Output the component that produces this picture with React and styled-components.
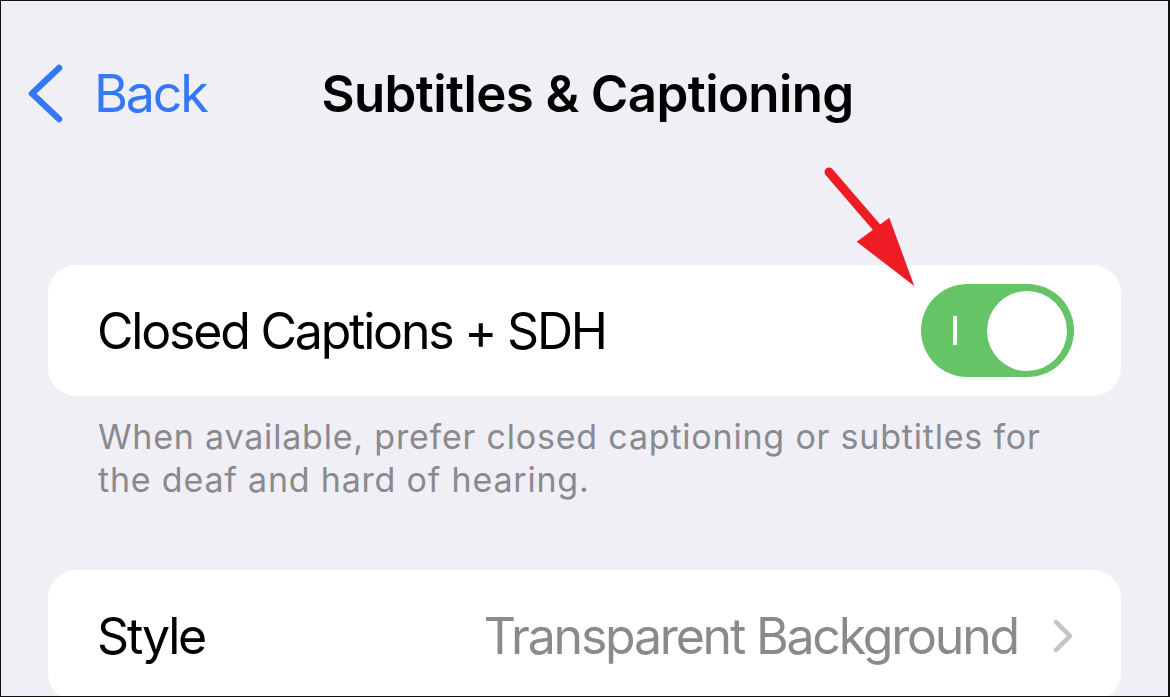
import styled, { createGlobalStyle } from "styled-components"

const GlobalStyle = createGlobalStyle`
  html, body {
    margin: 0;
    padding: 0;
    background: #f0eff5;
  }
  * { box-sizing: border-box; }
`

const Screen = styled.div`
  position: relative;
  width: 1170px;
  height: 697px;
  overflow: hidden;
  background: #f0eff5;
  border: 1px solid #111;
  border-right-width: 2px;
  font-family: Inter, "Noto Sans", sans-serif;
  color: #000;
`

const NavBar = styled.div`
  display: grid;
  grid-template-columns: 1fr auto 1fr;
  align-items: center;
  align-content: start;
  padding-top: 62px;
  height: 264px;
`

const BackButton = styled.div`
  display: flex;
  align-items: center;
  gap: 30px;
  padding-left: 27px;
  color: #3478f6;
  font-size: 52px;
  line-height: 62px;
  letter-spacing: -2.2px;
`

const Title = styled.h1`
  margin: 0;
  font-size: 51px;
  font-weight: 600;
  line-height: 62px;
  letter-spacing: -0.6px;
  transform: translateX(3px);
`

const Card = styled.div`
  margin: 0 47px;
  background: #fff;
  border-radius: 28px;
  height: 131px;
  display: flex;
  align-items: center;
  justify-content: space-between;
  padding: 0 47px 0 49px;
`

const Label = styled.span`
  font-size: 50px;
  letter-spacing: -2.2px;
`

const Value = styled.span`
  display: flex;
  align-items: center;
  gap: 34px;
  color: #8a8a8e;
  font-size: 50px;
  letter-spacing: -2.2px;
`

const Toggle = styled.div`
  width: 153px;
  height: 93px;
  border-radius: 47px;
  background: ${(p) => (p.$on ? "#65c466" : "#e9e9eb")};
  display: flex;
  align-items: center;
  justify-content: space-between;
  padding: 0 7px 0 32px;
`

const OnMark = styled.span`
  width: 4px;
  height: 29px;
  background: #fff;
`

const Knob = styled.span`
  width: 80px;
  height: 80px;
  border-radius: 50%;
  background: #fff;
`

const Footer = styled.p`
  margin: 0;
  padding: 19px 0 0 97px;
  width: 1070px;
  height: 174px;
  color: #8a8a8e;
  font-size: 34px;
  line-height: 43px;
  letter-spacing: 0.8px;
`

const Overlay = styled.svg`
  position: absolute;
  left: 0;
  top: 0;
  pointer-events: none;
`

const BackChevron = () => (
  <svg width="36" height="60" viewBox="0 0 36 60">
    <path d="M31 4 L4 29.5 L31 55" fill="none" stroke="#3478f6" strokeWidth="6.5" strokeLinecap="round" strokeLinejoin="round" />
  </svg>
)

const RowChevron = () => (
  <svg width="22" height="34" viewBox="0 0 22 34">
    <path d="M4 3 L18 17 L4 31" fill="none" stroke="#c4c4c7" strokeWidth="4.5" strokeLinecap="round" strokeLinejoin="round" />
  </svg>
)

const App = () => {
  return (
    <>
      <GlobalStyle />
      <Screen>
        <NavBar>
          <BackButton>
            <BackChevron />
            <span>Back</span>
          </BackButton>
          <Title>Subtitles &amp; Captioning</Title>
          <span />
        </NavBar>

        <Card>
          <Label>Closed Captions + SDH</Label>
          <Toggle $on>
            <OnMark />
            <Knob />
          </Toggle>
        </Card>
        <Footer>
          When available, prefer closed captioning or subtitles for the deaf and hard of hearing.
        </Footer>

        <Card>
          <Label>Style</Label>
          <Value>
            Transparent Background
            <RowChevron />
          </Value>
        </Card>

        <Overlay width="1170" height="697">
          <line x1="828" y1="171" x2="884" y2="236" stroke="#ee1c25" strokeWidth="9" strokeLinecap="round" />
          <polygon points="855.7,240.7 888.3,216.7 913.3,285" fill="#ee1c25" />
        </Overlay>
      </Screen>
    </>
  )
}

export default App
